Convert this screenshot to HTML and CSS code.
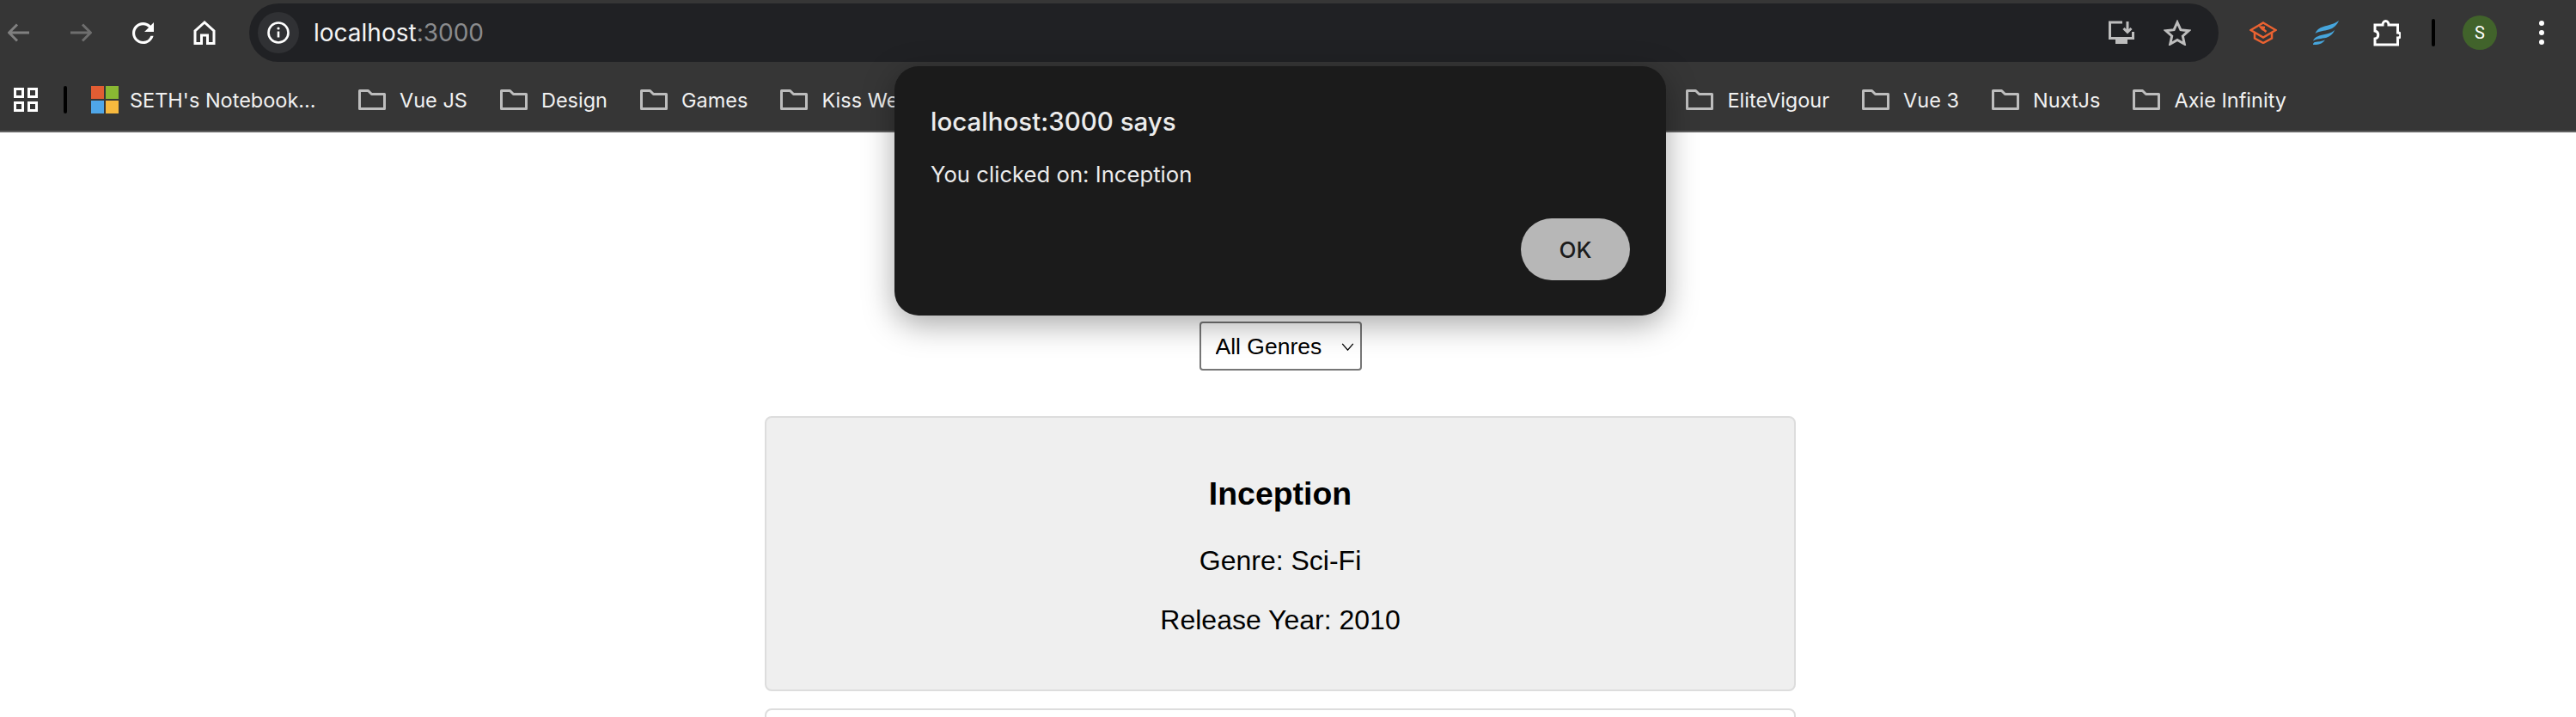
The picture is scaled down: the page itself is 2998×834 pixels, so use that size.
FILE: index.html
```html
<!DOCTYPE html>
<html lang="en">
<head>
  <meta charset="UTF-8" />
  <title>localhost:3000</title>
  <link rel="stylesheet" href="styles.css">
</head>
<body>
  <header class="chrome">
    <div class="toolbar">
      <div class="nav">
        <span class="nav-btn"><svg class="ico-arrow off" viewBox="0 0 26 22"><path d="M25 11H2M11 1.5 1.5 11l9.5 9.5"/></svg></span>
        <span class="nav-btn"><svg class="ico-arrow off2" viewBox="0 0 26 22"><path d="M1 11h23M15 1.5l9.5 9.5-9.5 9.5"/></svg></span>
        <span class="nav-btn"><svg class="ico-reload" viewBox="4 4 16 16"><path d="M17.65 6.35A7.958 7.958 0 0 0 12 4c-4.42 0-7.99 3.58-7.99 8s3.57 8 7.99 8c3.73 0 6.84-2.55 7.73-6h-2.08A5.99 5.99 0 0 1 12 18c-3.31 0-6-2.69-6-6s2.69-6 6-6c1.66 0 3.14.69 4.22 1.78L13 11h7V4l-2.35 2.35z"/></svg></span>
        <span class="nav-btn"><svg class="ico-home" viewBox="0 0 26 28"><path d="M13 2 2 12v14.500h7.500V17h7v9.500H24V12z"/></svg></span>
      </div>
      <div class="omnibox">
        <span class="site-chip">
          <svg class="ico-info" viewBox="0 0 26 26"><circle cx="13" cy="13" r="11.500"/><path d="M13 11.500v7"/><circle class="dot" cx="13" cy="8" r="1.600"/></svg>
        </span>
        <span class="url">localhost<span class="url-port">:3000</span></span>
        <span class="omni-actions">
          <svg class="ico-install" viewBox="0 0 32 28"><path d="M17 2H2.500v18.500h27V13"/><path d="M23 1v12M18.500 9l4.500 4.500L27.500 9"/><path class="solid" d="M9 21h14v6H9z"/></svg>
          <svg class="ico-star" viewBox="0 0 32 30"><path d="m16 3 3.900 8.700 9.400 1-7 6.300 2 9.200-8.300-4.700-8.300 4.700 2-9.200-7-6.300 9.400-1z"/></svg>
        </span>
      </div>
      <div class="extensions">
        <span class="ext-btn">
          <svg class="ico-cap" viewBox="0 0 32 26"><path d="M16 1.500 30.500 10 16 18.500 1.500 10z"/><path d="M6 13v6.500l10 5.500 10-5.500V13"/><path d="M16 10l-3-3.500 5 .5M13.500 7l6 5"/></svg>
        </span>
        <span class="ext-btn">
          <svg class="ico-wings" viewBox="0 0 32 28"><path d="M32 0C27 4 20 5 14 7 9 8.500 6 11 4.500 15 9 12 15 12 20 10.500 26 9 30 5 32 0z"/><path d="M27 11C23 15 17 15.500 11 17 6 18.500 3.500 20 2 23.500 6 21 12 21 17 20 22 18.500 25.500 15 27 11z"/><path d="M16 22.500C12 24.500 8 24 4 25 2.500 25.500 2 26.500 2 28 7 28.500 13 27 16 22.500z"/></svg>
        </span>
        <span class="ext-btn">
          <svg class="ico-puzzle" viewBox="0 0 32 32"><path d="M2 7h9c0-6 7-6 7 0h10.500v9c4.500 0 4.500 6 0 6v8H2v-7c5-1 5-8 0-9z"/></svg>
        </span>
        <span class="bar-sep"></span>
        <span class="ext-btn"><span class="avatar">S</span></span>
        <span class="ext-btn">
          <span class="menu-dots"><i></i><i></i><i></i></span>
        </span>
      </div>
    </div>
    <div class="bookmarks">
      <svg class="ico-apps" viewBox="0 0 28 28"><path d="M1.500 1.500h9v9h-9zM17.500 1.500h9v9h-9zM1.500 17.500h9v9h-9zM17.500 17.500h9v9h-9z"/></svg>
      <span class="bar-sep bm-sep"></span>
      <span class="bookmark bookmark-first">
        <span class="ms-logo"><i class="ms-red"></i><i class="ms-green"></i><i class="ms-blue"></i><i class="ms-yellow"></i></span>
        <span>SETH's Notebook...</span>
      </span>
      <span class="bookmark"><svg class="ico-folder" viewBox="0 0 32 24"><path d="M1.500 22.500v-21h10l4 4h15v17z"/></svg>Vue JS</span>
      <span class="bookmark"><svg class="ico-folder" viewBox="0 0 32 24"><path d="M1.500 22.500v-21h10l4 4h15v17z"/></svg>Design</span>
      <span class="bookmark"><svg class="ico-folder" viewBox="0 0 32 24"><path d="M1.500 22.500v-21h10l4 4h15v17z"/></svg>Games</span>
      <span class="bookmark"><svg class="ico-folder" viewBox="0 0 32 24"><path d="M1.500 22.500v-21h10l4 4h15v17z"/></svg>Kiss Web</span>
      <span class="bookmark bookmark-push"><svg class="ico-folder" viewBox="0 0 32 24"><path d="M1.500 22.500v-21h10l4 4h15v17z"/></svg>EliteVigour</span>
      <span class="bookmark"><svg class="ico-folder" viewBox="0 0 32 24"><path d="M1.500 22.500v-21h10l4 4h15v17z"/></svg>Vue 3</span>
      <span class="bookmark"><svg class="ico-folder" viewBox="0 0 32 24"><path d="M1.500 22.500v-21h10l4 4h15v17z"/></svg>NuxtJs</span>
      <span class="bookmark"><svg class="ico-folder" viewBox="0 0 32 24"><path d="M1.500 22.500v-21h10l4 4h15v17z"/></svg>Axie Infinity</span>
    </div>
  </header>

  <main class="page">
    <div class="select-wrap">
      <select class="genre-select">
        <option>All Genres</option>
      </select>
      <svg class="select-chevron" viewBox="0 0 16 10"><path d="M1 1l7 8 7-8"/></svg>
    </div>
    <section class="movie-card">
      <h3>Inception</h3>
      <p>Genre: Sci-Fi</p>
      <p>Release Year: 2010</p>
    </section>
    <section class="movie-card"></section>
  </main>

  <div class="alert">
    <div class="alert-title">localhost:3000 says</div>
    <div class="alert-msg">You clicked on: Inception</div>
    <div class="alert-actions"><button class="alert-ok">OK</button></div>
  </div>
</body>
</html>
```
FILE: styles.css
```css
html, body {
  height: 834px;
  overflow: hidden;
}

body {
  margin: 0;
  background: #fff;
  font-family: "Liberation Sans", Arial, sans-serif;
}

svg {
  display: block;
  flex: none;
}

/* browser chrome */
.chrome {
  height: 154px;
  box-sizing: border-box;
  background: #363636;
  border-bottom: 2px solid #606060;
  font-family: Inter, "Noto Sans", sans-serif;
  color: #f1f1f1;
}

.toolbar {
  display: flex;
  align-items: flex-start;
  height: 76px;
  padding-top: 4px;
  box-sizing: border-box;
}

.nav {
  display: flex;
  gap: 28px;
  margin-right: 30px;
}

.nav-btn {
  display: flex;
  align-items: center;
  justify-content: center;
  width: 44px;
  height: 68px;
}

.ico-arrow {
  width: 26px;
  height: 22px;
  fill: none;
  stroke-width: 3;
}

.off { stroke: #808080; }
.off2 { stroke: #6e6e6e; }

.ico-reload {
  width: 25px;
  height: 25px;
  fill: #fff;
}

.ico-home {
  width: 26px;
  height: 28px;
  fill: none;
  stroke: #fff;
  stroke-width: 3;
}

.omnibox {
  display: flex;
  align-items: center;
  flex: 1;
  height: 68px;
  padding: 0 32px 0 10px;
  background: #202124;
  border-radius: 34px;
}

.site-chip {
  display: flex;
  align-items: center;
  justify-content: center;
  width: 48px;
  height: 48px;
  margin-right: 17px;
  border-radius: 50%;
  background: #303134;
}

.ico-info {
  width: 26px;
  height: 26px;
  fill: none;
  stroke: #fff;
  stroke-width: 2.600;
}

.ico-info .dot {
  fill: #fff;
  stroke: none;
}

.url {
  font-size: 28px;
  color: #f4f4f4;
}

.url-port {
  color: #8a8b8d;
}

.omni-actions {
  display: flex;
  align-items: center;
  gap: 33px;
  margin-left: auto;
}

.ico-install {
  width: 32px;
  height: 28px;
  fill: none;
  stroke: #bdbdbd;
  stroke-width: 3;
}

.ico-install .solid {
  fill: #bdbdbd;
  stroke: none;
}

.ico-star {
  width: 32px;
  height: 30px;
  fill: none;
  stroke: #bdbdbd;
  stroke-width: 3;
}

.extensions {
  display: flex;
  align-items: center;
  height: 68px;
  margin-left: 16px;
  padding-right: 4px;
}

.ext-btn {
  display: flex;
  align-items: center;
  justify-content: center;
  width: 72px;
}

.ico-cap {
  width: 32px;
  height: 26px;
  fill: none;
  stroke: #ea6231;
  stroke-width: 2.500;
}

.ico-wings {
  width: 32px;
  height: 28px;
  fill: #46a5dc;
}

.ico-puzzle {
  width: 32px;
  height: 32px;
  fill: none;
  stroke: #fff;
  stroke-width: 3;
}

.bar-sep {
  width: 4px;
  height: 32px;
  margin: 0 16px;
  border-radius: 2px;
  background: #000;
}

.avatar {
  display: flex;
  align-items: center;
  justify-content: center;
  width: 40px;
  height: 40px;
  border-radius: 50%;
  background: #41632b;
  color: #fff;
  font-size: 20px;
  font-family: Roboto, sans-serif;
}

.menu-dots {
  display: flex;
  flex-direction: column;
  gap: 5px;
}

.menu-dots i {
  display: block;
  width: 6px;
  height: 6px;
  border-radius: 50%;
  background: #fff;
}

.bookmarks {
  display: flex;
  align-items: center;
  height: 76px;
  padding: 4px 337px 0 16px;
  box-sizing: border-box;
  font-size: 23.500px;
}

.ico-apps {
  width: 28px;
  height: 28px;
  fill: none;
  stroke: #fff;
  stroke-width: 3;
}

.bm-sep {
  margin: 0 28px 0 30px;
}

.bookmark {
  display: flex;
  align-items: center;
  gap: 16px;
  margin-right: 38px;
  white-space: nowrap;
}

.bookmark:last-child {
  margin-right: 0;
}

.bookmark-first {
  gap: 13px;
  width: 275px;
  margin-right: 36px;
}

.bookmark-push {
  margin-left: auto;
}

.ico-folder {
  width: 32px;
  height: 24px;
  fill: none;
  stroke: #bdbdbd;
  stroke-width: 3;
  stroke-linejoin: round;
}

.ms-logo {
  display: grid;
  grid-template-columns: 15px 15px;
  grid-template-rows: 15px 15px;
  gap: 2px;
}

.ms-logo i {
  display: block;
}

.ms-red { background: #e25d33; }
.ms-green { background: #8ab833; }
.ms-blue { background: #4fa6e8; }
.ms-yellow { background: #f7b93e; }

/* page */
.page {
  display: flex;
  flex-direction: column;
  align-items: center;
  padding: 220px 18px 0 0;
}

.select-wrap {
  position: relative;
  margin-bottom: 53px;
}

.genre-select {
  display: block;
  width: 189px;
  height: 57px;
  padding: 0 8px 0 17px;
  appearance: none;
  font-family: "Liberation Sans", Arial, sans-serif;
  font-size: 26.500px;
  background: #fff;
  color: #000;
  border: 2px solid #767676;
  border-radius: 4px;
}

.select-chevron {
  position: absolute;
  top: 25px;
  right: 9px;
  width: 15px;
  height: 9px;
  fill: none;
  stroke: #000;
  stroke-width: 1.500;
}

.movie-card {
  width: 1200px;
  box-sizing: border-box;
  padding: 30px;
  margin-bottom: 20px;
  flex: none;
  background: #efefef;
  border: 2px solid #ddd;
  border-radius: 8px;
  text-align: center;
}

.movie-card:last-child {
  background: #fff;
  height: 300px;
}

.movie-card h3 {
  margin: 37px 0 38px;
  font-size: 37.440px;
}

.movie-card p {
  margin: 32px 0;
  font-size: 32px;
}

/* alert dialog */
.alert {
  position: absolute;
  left: 1041px;
  top: 77px;
  width: 898px;
  height: 290px;
  box-sizing: border-box;
  padding: 44px 42px 0;
  background: #1b1b1b;
  border-radius: 28px;
  box-shadow: 0 10px 36px rgba(0, 0, 0, 0.35);
  font-family: Inter, "Noto Sans", sans-serif;
  color: #ececec;
}

.alert-title {
  font-size: 29.500px;
  font-weight: 500;
  line-height: 40px;
}

.alert-msg {
  margin-top: 24px;
  font-size: 25.700px;
  line-height: 36px;
}

.alert-actions {
  display: flex;
  justify-content: flex-end;
  margin-top: 33px;
}

.alert-ok {
  width: 127px;
  height: 72px;
  border: none;
  border-radius: 36px;
  background: #b7b7b7;
  color: #1b1b1b;
  font-family: Inter, "Noto Sans", sans-serif;
  font-size: 26px;
  font-weight: 500;
}
```
